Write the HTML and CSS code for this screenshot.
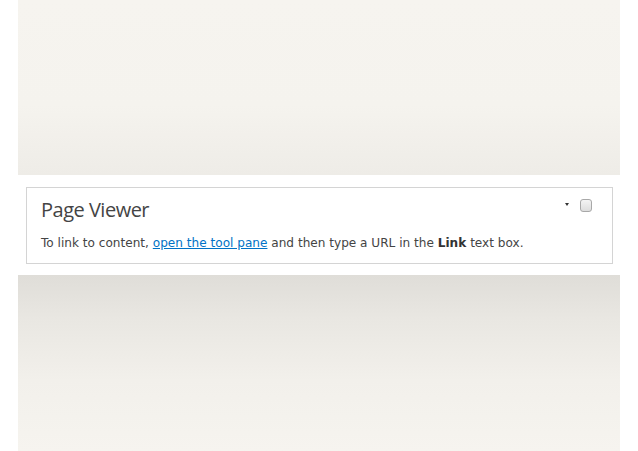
FILE: index.html
```html
<!DOCTYPE html>
<html>
<head>
<meta charset="utf-8">
<link rel="stylesheet" href="styles.css">
</head>
<body>
<div class="page">
  <div class="band band-top"></div>
  <div class="zone">
    <div class="webpart">
      <div class="wp-head">
        <h2 class="wp-title">Page Viewer</h2>
        <div class="wp-tools">
          <span class="wp-arrow"></span>
          <span class="wp-check"></span>
        </div>
      </div>
      <p class="wp-body">To link to content, <a href="#">open the tool pane</a> and then type a URL in the <b>Link</b> text box.</p>
    </div>
  </div>
  <div class="band band-bottom"></div>
</div>
</body>
</html>
```
FILE: styles.css
```css
html, body {
  margin: 0;
  padding: 0;
  background: #ffffff;
}
.page {
  width: 602px;
  margin-left: 18px;
  display: flex;
  flex-direction: column;
  height: 451px;
}
.band-top {
  height: 175px;
  background: linear-gradient(to bottom, #f6f4ef 0%, #f5f3ee 60%, #eeece7 100%);
}
.band-bottom {
  flex: 1;
  background: linear-gradient(to bottom, #dfddd8 0%, #e9e7e2 25%, #f2f0eb 60%, #f6f4ef 100%);
}
.zone {
  background: #ffffff;
  padding: 12px 7px 12px 8px;
  height: 100px;
  box-sizing: border-box;
}
.webpart {
  border: 1px solid #d4d4d4;
  height: 77px;
  box-sizing: border-box;
  padding: 0 20px 0 14px;
  font-family: "DejaVu Sans", Verdana, sans-serif;
  color: #444444;
}
.wp-head {
  display: flex;
  justify-content: space-between;
  align-items: flex-start;
}
.wp-title {
  margin: 9px 0 0 0;
  font-family: "Open Sans", sans-serif;
  font-weight: 400;
  font-size: 20px;
  line-height: 26px;
  color: #444444;
  letter-spacing: -0.5px;
}
.wp-tools {
  display: flex;
  align-items: center;
  gap: 11px;
  margin-top: 11px;
}
.wp-arrow {
  width: 0;
  height: 0;
  border-left: 2.5px solid transparent;
  border-right: 2.5px solid transparent;
  border-top: 3px solid #333333;
  margin-top: -3px;
}
.wp-check {
  width: 12px;
  height: 13px;
  border: 1px solid #a8a8a8;
  border-radius: 3px;
  background: linear-gradient(#f4f4f4, #dddddd);
  box-sizing: border-box;
}
.wp-body {
  margin: 13px 0 0 0;
  font-size: 12.1px;
  line-height: 15px;
  color: #444444;
}
.wp-body a {
  color: #0072c6;
  text-decoration: underline;
}
.wp-body b {
  font-weight: 700;
  color: #333333;
}
```
